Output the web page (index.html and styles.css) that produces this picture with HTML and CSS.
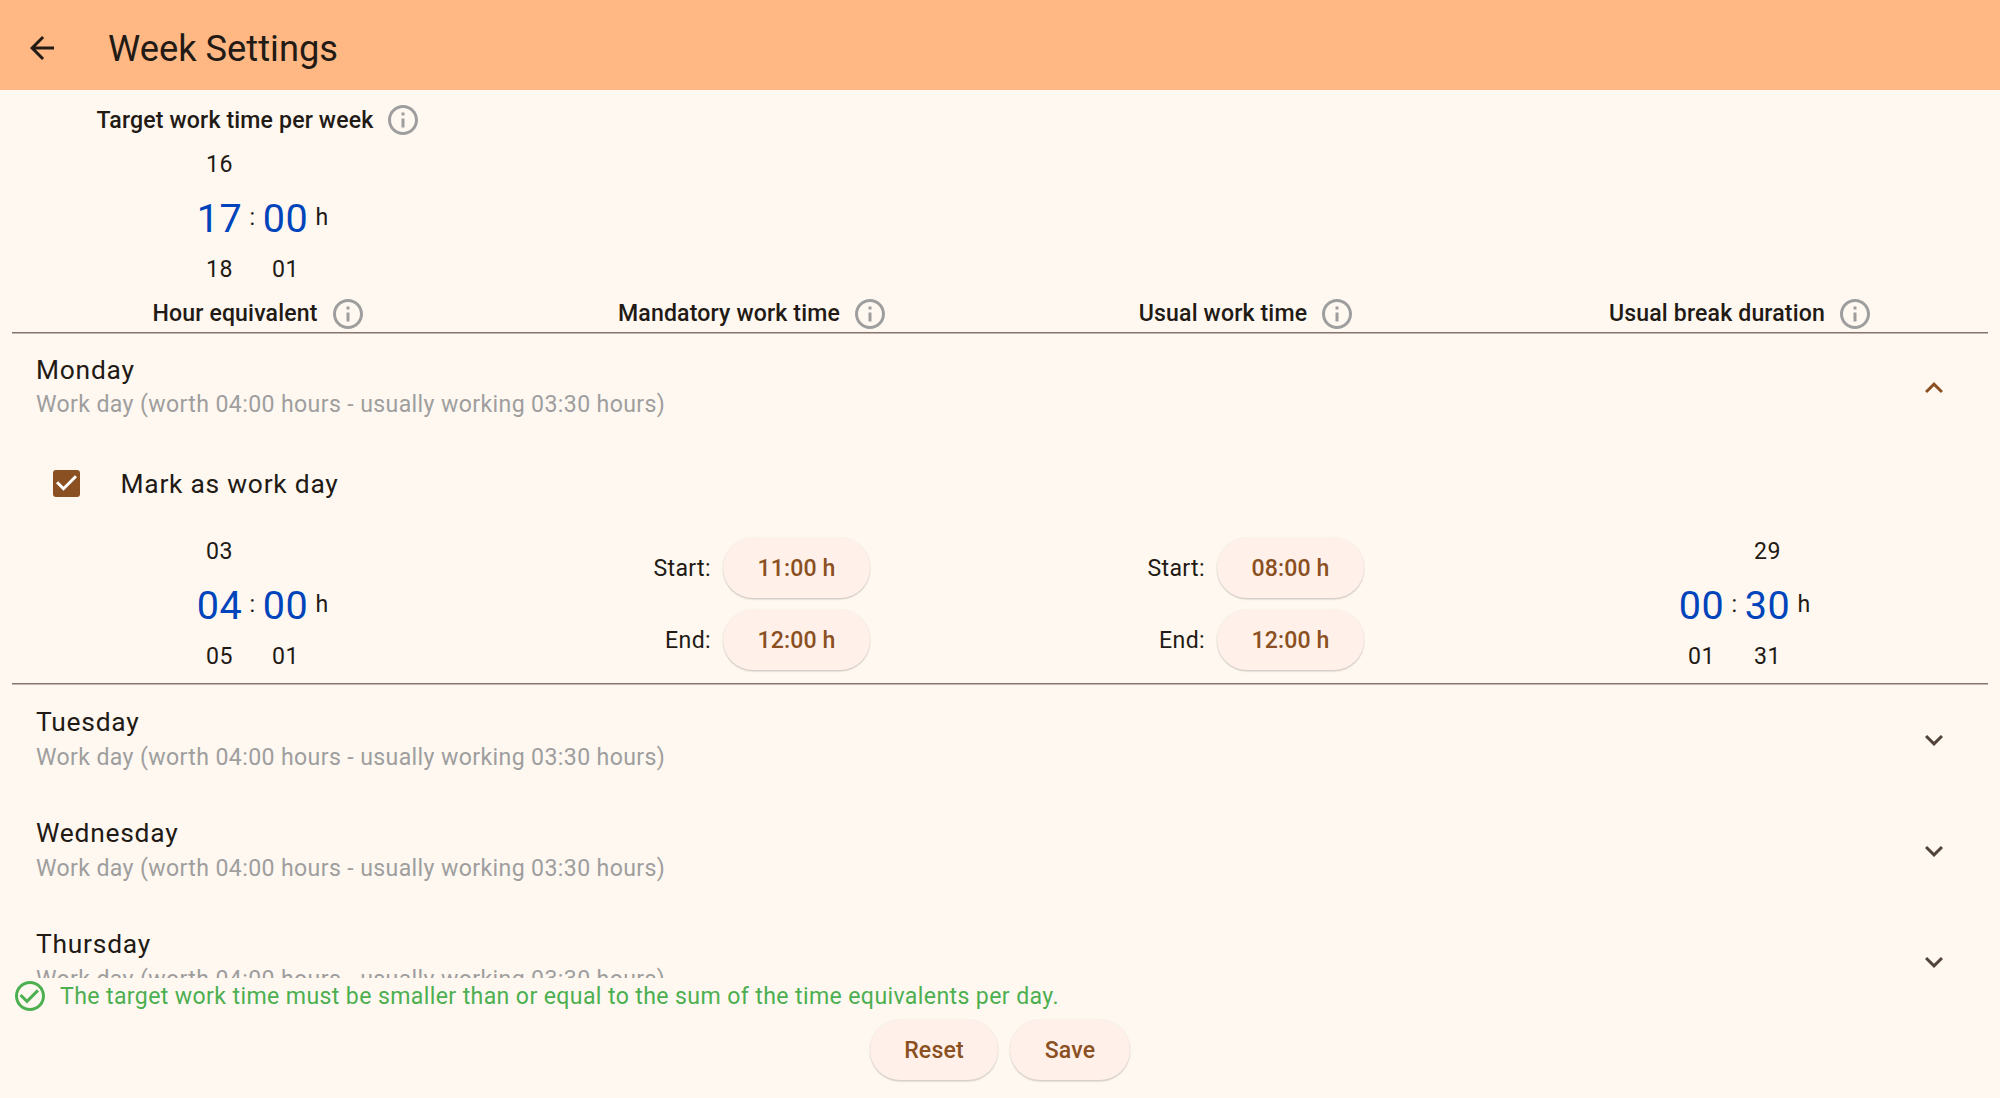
FILE: index.html
```html
<!DOCTYPE html>
<html lang="en">
<head>
<meta charset="utf-8">
<title>Week Settings</title>
<link rel="stylesheet" href="styles.css">
</head>
<body>
<svg class="defs" aria-hidden="true">
  <symbol id="info" viewBox="0 0 24 24"><path d="M11 7h2v2h-2zm0 4h2v6h-2zm1-9C6.48 2 2 6.48 2 12s4.48 10 10 10 10-4.48 10-10S17.52 2 12 2zm0 18c-4.41 0-8-3.59-8-8s3.59-8 8-8 8 3.59 8 8-3.59 8-8 8z"/></symbol>
  <symbol id="more" viewBox="0 0 24 24"><path d="M16.59 8.59L12 13.17 7.41 8.59 6 10l6 6 6-6z"/></symbol>
</svg>
<header class="app-bar">
  <svg class="icon" viewBox="0 0 24 24"><path d="M20 11H7.83l5.59-5.59L12 4l-8 8 8 8 1.41-1.41L7.83 13H20z"/></svg>
  <h1 class="title">Week Settings</h1>
</header>
<main class="content">
  <section class="columns">
    <div class="column">
      <div class="heading">Target work time per week<svg class="icon"><use href="#info"/></svg></div>
      <div class="picker">
        <div class="wheel"><span>16</span><span class="selected">17</span><span>18</span></div>
        <span>:</span>
        <div class="wheel"><span></span><span class="selected">00</span><span>01</span></div>
        <span>h</span>
      </div>
    </div>
  </section>
  <section class="columns table-head">
    <div class="heading"><span>Hour equivalent</span><svg class="icon"><use href="#info"/></svg></div>
    <div class="heading"><span>Mandatory work time</span><svg class="icon"><use href="#info"/></svg></div>
    <div class="heading"><span>Usual work time</span><svg class="icon"><use href="#info"/></svg></div>
    <div class="heading"><span>Usual break duration</span><svg class="icon"><use href="#info"/></svg></div>
  </section>
  <section class="days">
    <article class="day expanded">
      <div class="tile">
        <div><div class="day-name">Monday</div><div class="summary">Work day (worth 04:00 hours - usually working 03:30 hours)</div></div>
        <svg class="icon" viewBox="0 0 24 24"><path d="M12 8l-6 6 1.41 1.41L12 10.83l4.59 4.58L18 14z"/></svg>
      </div>
      <div class="mark">
        <span class="checkbox"><svg viewBox="0 0 18 18"><path d="M2.7 8.2 7 12.5 15.3 4.2"/></svg></span>
        <span class="mark-label">Mark as work day</span>
      </div>
      <div class="columns editors">
        <div class="picker">
          <div class="wheel"><span>03</span><span class="selected">04</span><span>05</span></div>
          <span>:</span>
          <div class="wheel"><span></span><span class="selected">00</span><span>01</span></div>
          <span>h</span>
        </div>
        <div class="times">
          <span>Start:</span><button class="button time">11:00 h</button>
          <span>End:</span><button class="button time">12:00 h</button>
        </div>
        <div class="times">
          <span>Start:</span><button class="button time">08:00 h</button>
          <span>End:</span><button class="button time">12:00 h</button>
        </div>
        <div class="picker">
          <div class="wheel"><span></span><span class="selected">00</span><span>01</span></div>
          <span>:</span>
          <div class="wheel"><span>29</span><span class="selected">30</span><span>31</span></div>
          <span>h</span>
        </div>
      </div>
    </article>
    <article class="day tile">
      <div><div class="day-name">Tuesday</div><div class="summary">Work day (worth 04:00 hours - usually working 03:30 hours)</div></div>
      <svg class="icon"><use href="#more"/></svg>
    </article>
    <article class="day tile">
      <div><div class="day-name">Wednesday</div><div class="summary">Work day (worth 04:00 hours - usually working 03:30 hours)</div></div>
      <svg class="icon"><use href="#more"/></svg>
    </article>
    <article class="day tile">
      <div><div class="day-name">Thursday</div><div class="summary">Work day (worth 04:00 hours - usually working 03:30 hours)</div></div>
      <svg class="icon"><use href="#more"/></svg>
    </article>
  </section>
</main>
<footer class="footer">
  <div class="status">
    <svg class="icon" viewBox="0 0 24 24"><path d="M16.59 7.58L10 14.17l-3.59-3.58L5 12l5 5 8-8zM12 2C6.48 2 2 6.48 2 12s4.48 10 10 10 10-4.48 10-10S17.52 2 12 2zm0 18c-4.42 0-8-3.58-8-8s3.58-8 8-8 8 3.58 8 8-3.58 8-8 8z"/></svg>
    <span>The target work time must be smaller than or equal to the sum of the time equivalents per day.</span>
  </div>
  <div class="actions">
    <button class="button reset">Reset</button>
    <button class="button save">Save</button>
  </div>
</footer>
</body>
</html>
```
FILE: styles.css
```css
* { box-sizing: border-box; }
body {
  margin: 0;
  height: 100vh;
  display: flex;
  flex-direction: column;
  overflow: hidden;
  background: #fff8f1;
  color: #221a15;
  font: 400 23.1px/33px Roboto, sans-serif;
  letter-spacing: 0.375px;
}
.defs { display: none; }
.icon { width: 36px; height: 36px; flex: none; fill: currentColor; }

.app-bar {
  flex: none;
  height: 90px;
  padding: 6px 24px 0;
  display: flex;
  align-items: center;
  gap: 48px;
  background: #ffb783;
}
.title { margin: 0; padding-top: 2px; font-size: 36.3px; line-height: 46px; font-weight: 400; letter-spacing: 0; }

.content {
  flex: 1;
  min-height: 0;
  padding: 12px 12px 0;
  display: flex;
  flex-direction: column;
}
.columns { flex: none; display: grid; grid-template-columns: repeat(4, 1fr); }
.heading {
  height: 36px;
  display: flex;
  align-items: center;
  justify-content: center;
  gap: 12px;
  font-weight: 500;
  letter-spacing: 0.15px;
}
.heading .icon { color: #9e9e9e; }
.table-head span { padding-bottom: 1px; }

.picker { height: 158px; display: flex; align-items: center; justify-content: center; }
.wheel { width: 60px; display: grid; grid-template-rows: repeat(3, 52.5px); place-items: center; }
.selected { color: #0044bb; font-size: 39.6px; line-height: 48px; padding-top: 4px; }

.days { flex: 1; min-height: 0; overflow: hidden; }
.expanded {
  padding: 1px 0;
  border-top: 1px solid #85746b;
  border-bottom: 1px solid #c2b6ae;
  box-shadow: inset 0 1px #c2b6ae, inset 0 -1px #85746b;
}
.tile {
  height: 111px;
  padding: 0 36px 4px 24px;
  display: flex;
  align-items: center;
  justify-content: space-between;
}
.tile .icon { margin-top: 2px; }
.expanded .tile { padding-bottom: 6px; }
.day-name { font-size: 26.4px; line-height: 37px; letter-spacing: 0.75px; }
.expanded .day-name { line-height: 35px; }
.summary { color: #9e9e9e; }
.expanded .icon { color: #8b5022; }
.day > .icon { color: #52443b; }
.mark {
  height: 78px;
  padding-left: 40.5px;
  padding-bottom: 1px;
  display: flex;
  align-items: center;
  gap: 41px;
  font-size: 26.4px;
  letter-spacing: 0.75px;
}
.mark-label { padding-top: 2px; }
.checkbox { width: 27px; height: 27px; border-radius: 3px; background: #8b5022; }
.checkbox svg { display: block; fill: none; stroke: #fff; stroke-width: 2; }
.editors { height: 160px; padding-top: 2px; align-items: center; }

.times {
  display: grid;
  grid-template-columns: 75px 147px;
  gap: 12px;
  justify-content: center;
  align-items: center;
  text-align: right;
}
.button {
  height: 60px;
  padding: 0;
  border: 0;
  border-radius: 30px;
  background: #fff0e9;
  color: #8b5022;
  font: 500 23.1px/33px Roboto, sans-serif;
  letter-spacing: 0.15px;
  box-shadow: 0 1.5px 1.5px rgba(0, 0, 0, 0.16), 0 0 2px rgba(0, 0, 0, 0.08);
}
.reset { width: 128px; }
.save { width: 120px; }

.footer { flex: none; height: 120px; }
.status { padding-left: 12px; display: flex; align-items: center; gap: 12px; color: #4caf50; }
.actions { padding-top: 6px; display: flex; justify-content: center; gap: 12px; }
```
